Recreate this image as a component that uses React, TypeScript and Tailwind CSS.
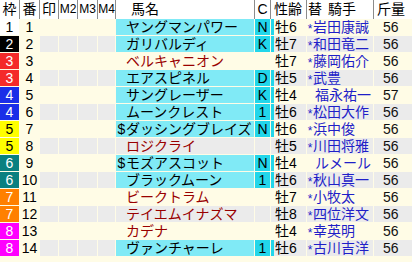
import React from 'react';

interface Entry {
  waku: number;
  ban: number;
  dollar?: boolean;
  name: string;
  c: string;
  sei: string;
  star: boolean;
  jockey: string;
  kin: string;
}

const entries: Entry[] = [
  { waku: 1, ban: 1, name: 'ヤングマンパワー', c: 'N', sei: '牡6', star: true, jockey: '岩田康誠', kin: '56' },
  { waku: 2, ban: 2, name: 'ガリバルディ', c: 'K', sei: '牡7', star: true, jockey: '和田竜二', kin: '56' },
  { waku: 3, ban: 3, name: 'ベルキャニオン', c: '', sei: '牡7', star: true, jockey: '藤岡佑介', kin: '56' },
  { waku: 3, ban: 4, name: 'エアスピネル', c: 'D', sei: '牡5', star: true, jockey: '武豊', kin: '56' },
  { waku: 4, ban: 5, name: 'サングレーザー', c: 'K', sei: '牡4', star: false, jockey: '福永祐一', kin: '57' },
  { waku: 4, ban: 6, name: 'ムーンクレスト', c: '1', sei: '牡6', star: true, jockey: '松田大作', kin: '56' },
  { waku: 5, ban: 7, dollar: true, name: 'ダッシングブレイズ', c: 'N', sei: '牡6', star: true, jockey: '浜中俊', kin: '56' },
  { waku: 5, ban: 8, name: 'ロジクライ', c: '', sei: '牡5', star: true, jockey: '川田将雅', kin: '56' },
  { waku: 6, ban: 9, dollar: true, name: 'モズアスコット', c: 'N', sei: '牡4', star: false, jockey: 'ルメール', kin: '56' },
  { waku: 6, ban: 10, name: 'ブラックムーン', c: '1', sei: '牡6', star: true, jockey: '秋山真一', kin: '56' },
  { waku: 7, ban: 11, name: 'ビークトラム', c: '', sei: '牡7', star: true, jockey: '小牧太', kin: '56' },
  { waku: 7, ban: 12, name: 'テイエムイナズマ', c: '', sei: '牡8', star: true, jockey: '四位洋文', kin: '56' },
  { waku: 8, ban: 13, name: 'カデナ', c: '', sei: '牡4', star: true, jockey: '幸英明', kin: '56' },
  { waku: 8, ban: 14, name: 'ヴァンチャーレ', c: '1', sei: '牡6', star: true, jockey: '古川吉洋', kin: '56' },
];

const wakuStyle: Record<number, string> = {
  1: 'bg-white text-black',
  2: 'bg-black text-white',
  3: 'bg-[#f42a2a] text-white',
  4: 'bg-[#1a2ee8] text-white',
  5: 'bg-[#ffff00] text-black',
  6: 'bg-[#0a8080] text-white',
  7: 'bg-[#ff8000] text-white',
  8: 'bg-[#ff00ff] text-white',
};

const Row = ({ e, i }: { e: Entry; i: number }) => {
  const gray = i % 2 === 1;
  const cell = gray ? 'bg-[#ebebeb]' : 'bg-[#fffce6]';
  const cyan = e.c !== '';
  return (
    <div className="flex h-4 gap-px leading-4">
      <div className={`w-[19px] text-center ${wakuStyle[e.waku]}`}>{e.waku}</div>
      <div className="w-[19px] bg-[#fffce6] text-center">{e.ban}</div>
      <div className={`w-[18px] ${cell}`}></div>
      <div className={`w-[18px] ${cell}`}></div>
      <div className={`w-[19px] ${cell}`}></div>
      <div className={`w-[17px] ${cell}`}></div>
      <div className={`flex w-[138px] pl-[1px] ${cyan ? 'bg-[#80eaf6] text-black' : `${cell} text-[#990000]`}`}>
        <span className="w-[9px] text-center">{e.dollar ? '$' : ''}</span>
        <span className="whitespace-nowrap">{e.name}</span>
      </div>
      <div className={`w-[15px] text-center ${cyan ? 'bg-[#22d6ea]' : cell}`}>{e.c}</div>
      <div className={`flex w-[35px] ${cell}`}>
        <span className={`w-[3px] ${cyan ? 'bg-[#22d6ea]' : ''}`}></span>
        <span className="pl-[1px]">{e.sei}</span>
      </div>
      <div className={`flex w-[66px] text-[#1f1fc8] ${cell}`}>
        <span className={`${e.star ? 'w-[6px]' : 'w-[8px]'} pt-[2px] text-center text-[12px]`}>{e.star ? '*' : ''}</span>
        <span className="whitespace-nowrap">{e.jockey}</span>
      </div>
      <div className={`w-[38px] pl-[9px] text-[#111] ${cell}`}>{e.kin}</div>
    </div>
  );
};

export default function App() {
  return (
    <div className="w-[412px] h-[262px] overflow-hidden bg-[#fffce6] text-[14px] text-black" style={{ fontFamily: '"Liberation Sans", "Noto Sans CJK JP", sans-serif' }}>
      <div className="flex h-[19px] bg-white leading-[19px]">
        <div className="w-[20px] border-r border-[#8c8c8c] text-center">枠</div>
        <div className="w-[20px] border-r border-[#8c8c8c] text-center">番</div>
        <div className="w-[19px] border-r border-[#8c8c8c] text-center">印</div>
        <div className="w-[19px] border-r border-[#8c8c8c] text-center text-[12px]">M2</div>
        <div className="w-[20px] border-r border-[#8c8c8c] text-center text-[12px]">M3</div>
        <div className="w-[18px] border-r border-[#8c8c8c] text-center text-[12px]">M4</div>
        <div className="w-[139px] border-r border-[#8c8c8c] pl-[15px]">馬名</div>
        <div className="w-[16px] border-r border-[#8c8c8c] text-center">C</div>
        <div className="w-[36px] border-r border-[#8c8c8c] pl-[3px]">性齢</div>
        <div className="w-[67px] border-r border-[#8c8c8c] pl-[1px] whitespace-nowrap">替<span className="ml-[6px]">騎手</span></div>
        <div className="w-[38px] pl-[3px]">斤量</div>
      </div>
      <div className="flex flex-col gap-px">
        {entries.map((e, i) => (
          <Row key={e.ban} e={e} i={i} />
        ))}
      </div>
    </div>
  );
}
